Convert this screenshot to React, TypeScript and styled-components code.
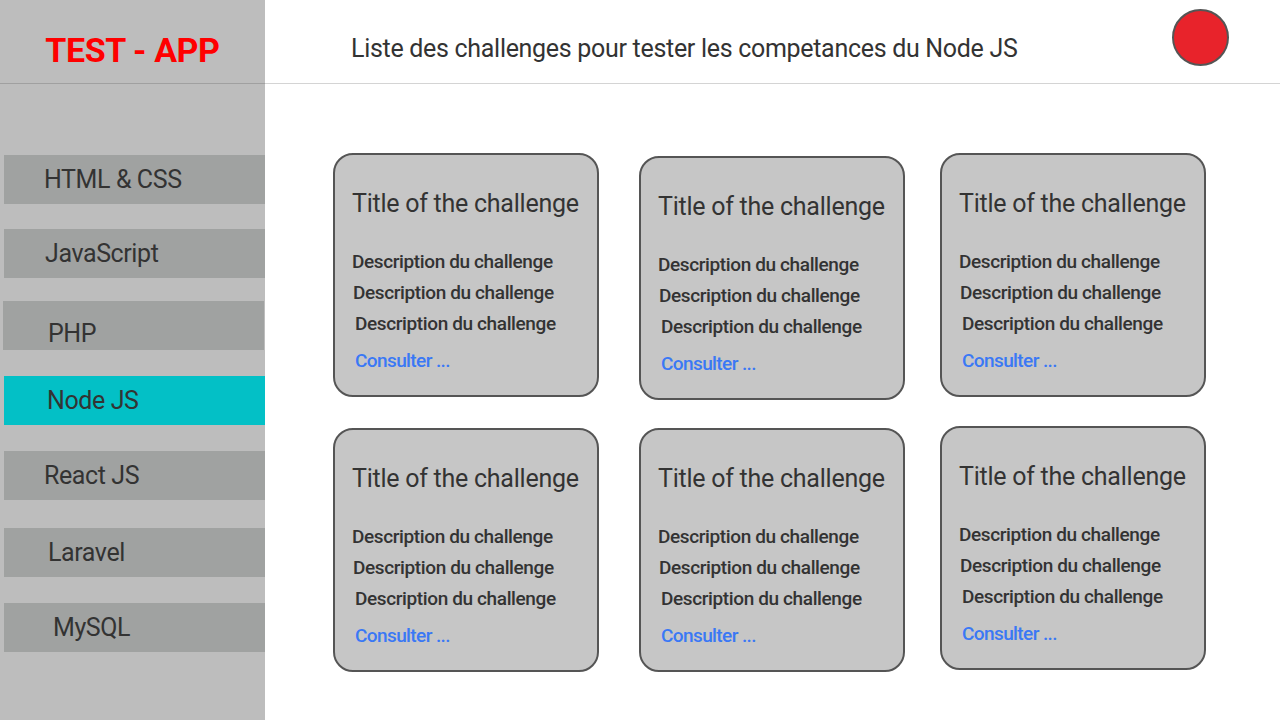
import React from "react";
import styled, { createGlobalStyle } from "styled-components";

const Global = createGlobalStyle`
  html, body { margin: 0; padding: 0; background: #ffffff; }
  body { font-family: Roboto, "Liberation Sans", sans-serif; color: #333333; }
  * { box-sizing: border-box; }
`;

const Page = styled.div`
  display: grid;
  grid-template-columns: 265px 1fr;
  width: 1280px;
  height: 720px;
  overflow: hidden;
`;

const Sidebar = styled.aside`
  background: #bdbdbd;
  display: flex;
  flex-direction: column;
`;

const Brand = styled.div`
  height: 84px;
  border-bottom: 1px solid rgba(0, 0, 0, 0.15);
  display: flex;
  align-items: center;
  justify-content: center;
  padding-top: 17px;
  font-size: 34px;
  font-weight: 700;
  letter-spacing: -0.4px;
  color: #ff0000;
  line-height: 1;
`;

const Nav = styled.nav`
  display: flex;
  flex-direction: column;
  gap: 25px;
  padding: 71px 0 0 4px;
`;

const NavItem = styled.div<{ $active?: boolean; $pl: number; $dy?: number; $dx?: number; $pt?: number }>`
  height: 49px;
  display: flex;
  align-items: center;
  background: ${(p) => (p.$active ? "#03c0c6" : "#a0a2a1")};
  padding-left: ${(p) => p.$pl}px;
  padding-top: ${(p) => p.$pt ?? 0}px;
  margin: ${(p) => p.$dy ?? 0}px 0 ${(p) => -(p.$dy ?? 0)}px ${(p) => p.$dx ?? 0}px;
  ${(p) => (p.$dx ? `margin-right: ${-p.$dx}px;` : "")}
  font-size: 25px;
  letter-spacing: -0.4px;
  line-height: 1;
  color: #333333;
`;

const Main = styled.main`
  display: flex;
  flex-direction: column;
`;

const TopBar = styled.header`
  height: 84px;
  border-bottom: 1px solid rgba(0, 0, 0, 0.17);
  display: flex;
  justify-content: space-between;
  align-items: flex-start;
  padding: 0 51px 0 86px;
`;

const PageTitle = styled.h1`
  margin: 0;
  height: 83px;
  display: flex;
  align-items: center;
  padding-top: 13px;
  font-size: 25px;
  font-weight: 400;
  letter-spacing: -0.3px;
  line-height: 1;
  color: #333333;
`;

const Avatar = styled.div`
  width: 57px;
  height: 57px;
  margin-top: 9px;
  border-radius: 50%;
  background: #e8232b;
  border: 2px solid #555555;
`;

const CardGrid = styled.section`
  display: grid;
  grid-template-columns: repeat(3, 266px);
  grid-auto-rows: 244px;
  column-gap: 40px;
  row-gap: 31px;
  padding: 69px 0 0 68px;
`;

const Card = styled.article<{ $dx?: number; $dy?: number }>`
  width: 266px;
  height: 244px;
  margin: ${(p) => p.$dy ?? 0}px 0 ${(p) => -(p.$dy ?? 0)}px ${(p) => p.$dx ?? 0}px;
  background: #c6c6c6;
  border: 2px solid #555555;
  border-radius: 20px;
  padding: 34px 0 0 17px;
  display: flex;
  flex-direction: column;
`;

const CardTitle = styled.h2`
  margin: 0 0 27px 0;
  font-size: 25px;
  font-weight: 400;
  letter-spacing: -0.25px;
  line-height: 30px;
  color: #333333;
`;

const Desc = styled.p<{ $indent: number }>`
  margin: 0;
  padding-left: ${(p) => p.$indent}px;
  font-size: 19px;
  font-weight: 500;
  letter-spacing: -0.38px;
  line-height: 31px;
  color: #333333;
`;

const More = styled.a`
  margin-top: 6px;
  padding-left: 3px;
  font-size: 19px;
  font-weight: 500;
  letter-spacing: -0.6px;
  line-height: 31px;
  color: #3a78f5;
  text-decoration: none;
`;

const navItems = [
  { label: "HTML & CSS", pl: 40 },
  { label: "JavaScript", pl: 41 },
  { label: "PHP", pl: 45, dy: -2, dx: -1, pt: 15 },
  { label: "Node JS", pl: 43, dy: -1, active: true },
  { label: "React JS", pl: 40 },
  { label: "Laravel", pl: 44, dy: 3 },
  { label: "MySQL", pl: 49, dy: 4 },
];

const cards = [
  { dx: 0, dy: 0 },
  { dx: 0, dy: 3 },
  { dx: -5, dy: 0 },
  { dx: 0, dy: 0 },
  { dx: 0, dy: 0 },
  { dx: -5, dy: -2 },
];

export default function App() {
  return (
    <>
      <Global />
      <Page>
        <Sidebar>
          <Brand>TEST - APP</Brand>
          <Nav>
            {navItems.map((n) => (
              <NavItem key={n.label} $active={n.active} $pl={n.pl} $dy={n.dy} $dx={n.dx} $pt={n.pt}>
                {n.label}
              </NavItem>
            ))}
          </Nav>
        </Sidebar>
        <Main>
          <TopBar>
            <PageTitle>Liste des challenges pour tester les competances du Node JS</PageTitle>
            <Avatar />
          </TopBar>
          <CardGrid>
            {cards.map((c, i) => (
              <Card key={i} $dx={c.dx} $dy={c.dy}>
                <CardTitle>Title of the challenge</CardTitle>
                <Desc $indent={0}>Description du challenge</Desc>
                <Desc $indent={1}>Description du challenge</Desc>
                <Desc $indent={3}>Description du challenge</Desc>
                <More href="#">Consulter ...</More>
              </Card>
            ))}
          </CardGrid>
        </Main>
      </Page>
    </>
  );
}
